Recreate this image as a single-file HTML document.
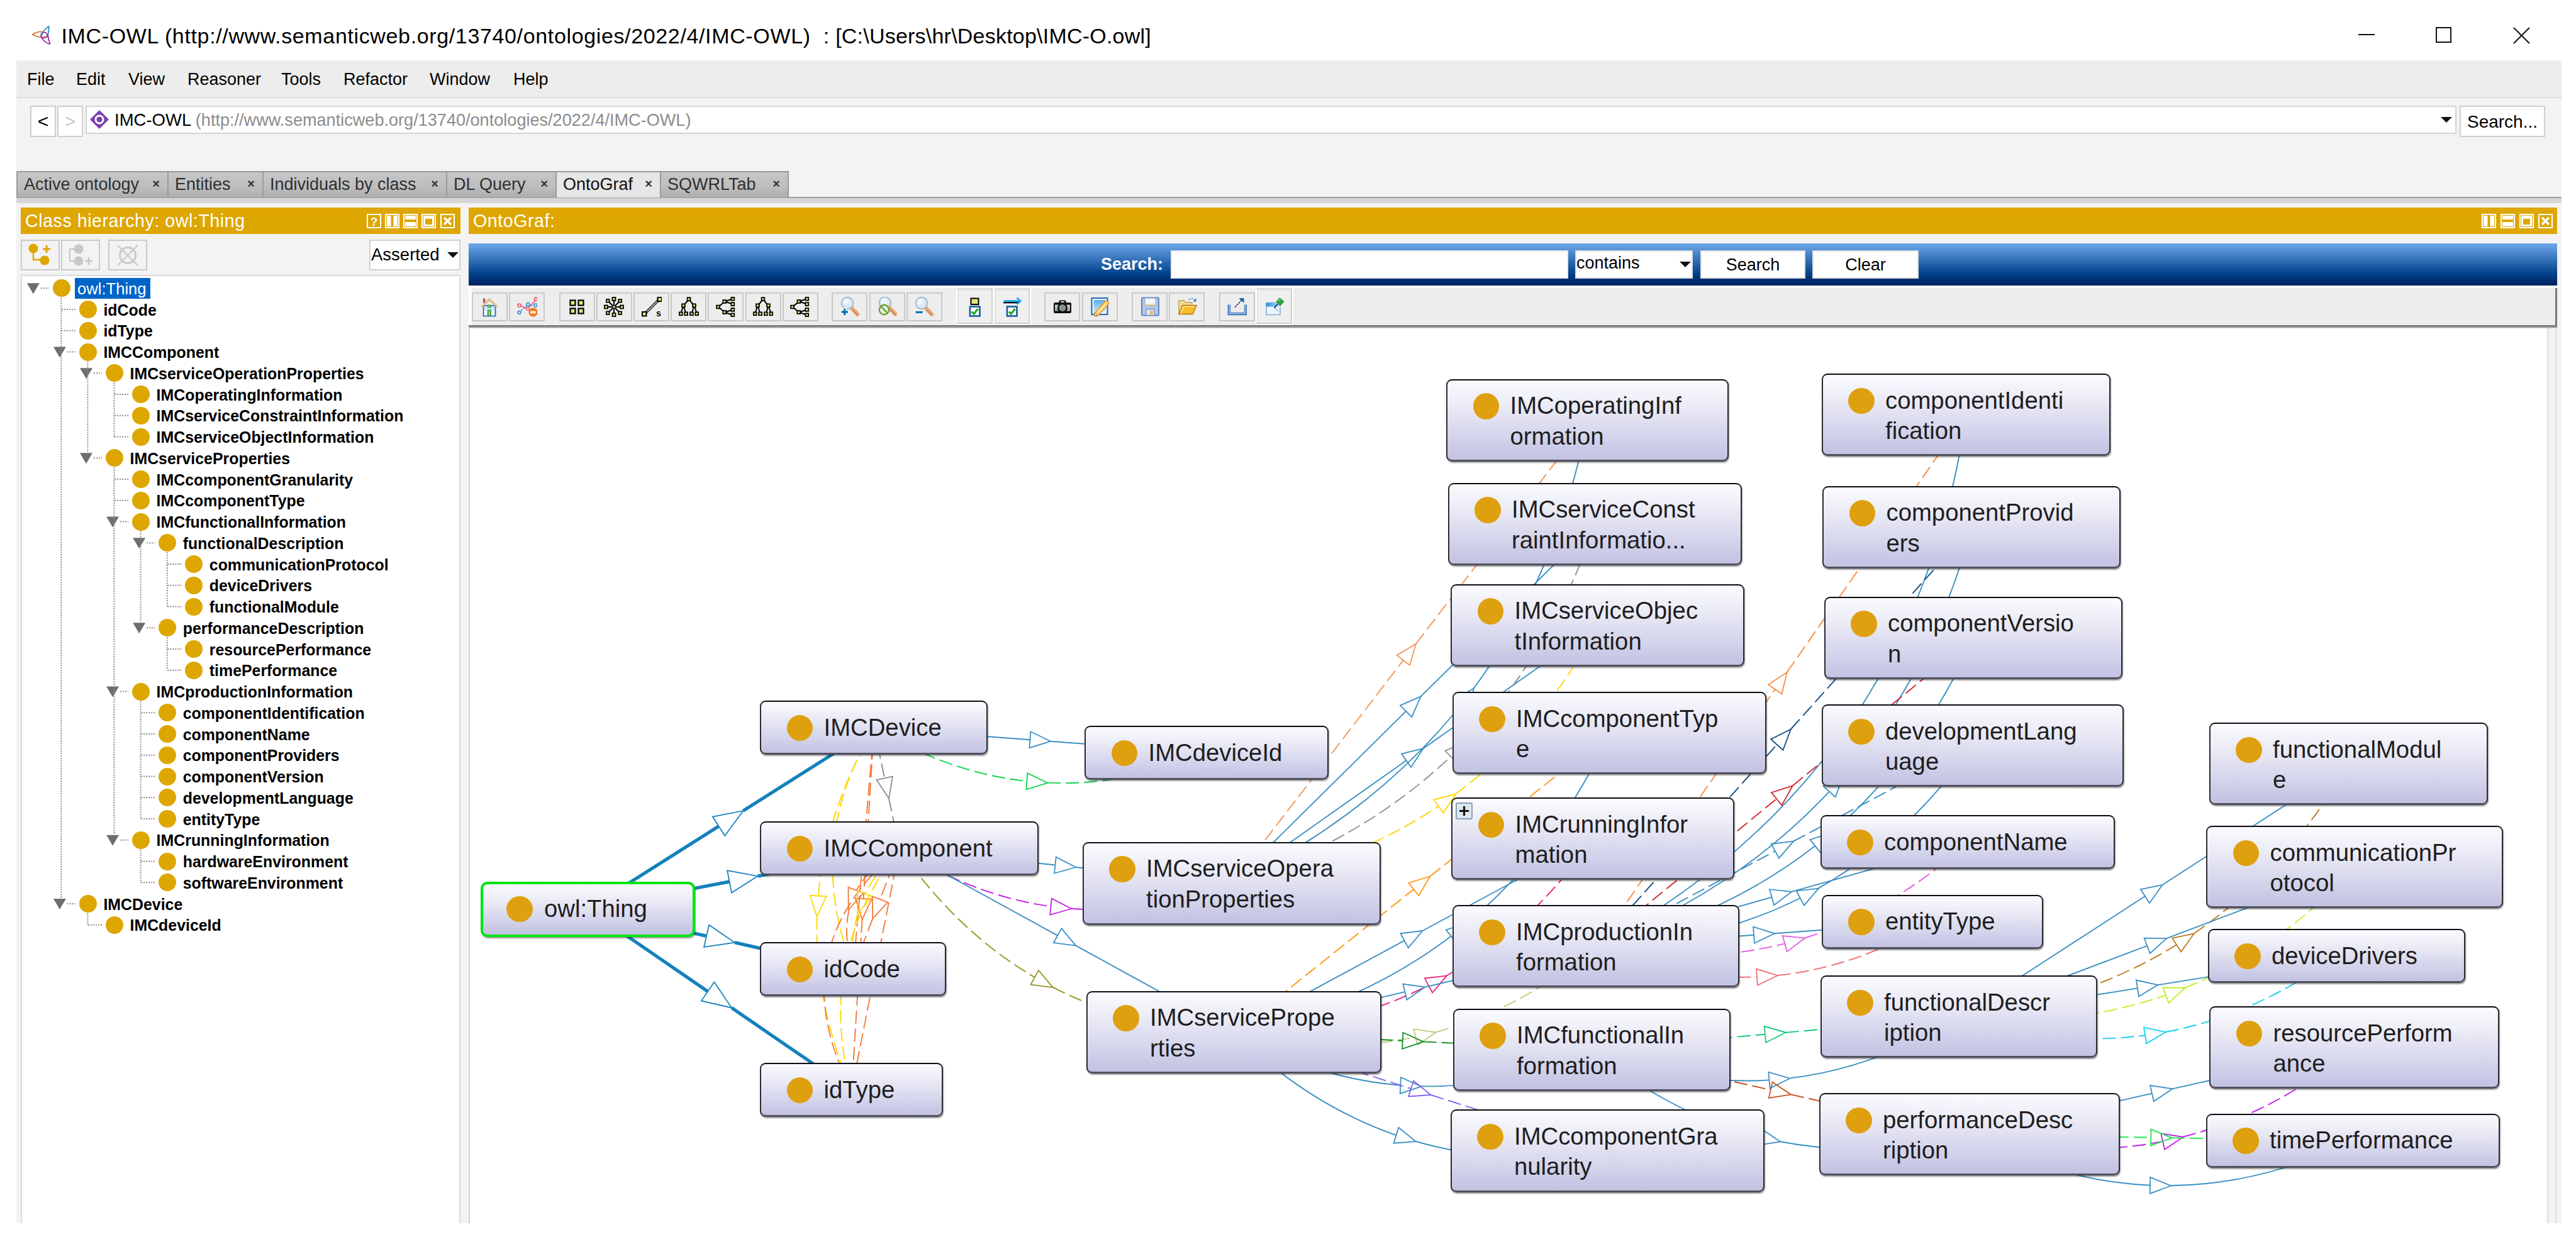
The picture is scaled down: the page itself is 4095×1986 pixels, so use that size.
<!DOCTYPE html><html><head><meta charset="utf-8"><title>IMC-OWL</title><style>
*{box-sizing:border-box;margin:0;padding:0}
html,body{width:4095px;height:1986px;background:#fff;overflow:hidden}
body{position:relative;font-family:"Liberation Sans",sans-serif;color:#000}
.abs{position:absolute}
.t{position:absolute;white-space:nowrap;line-height:1}
#title{left:97.5px;top:40px;font-size:34px;color:#000;letter-spacing:0.5px}
#win{left:26px;top:96px;width:4046px;height:1849px;background:#f3f3f3}
#menubar{left:26px;top:96px;width:4046px;height:60px;background:#ededed;border-bottom:2px solid #dcdcdc}
.menu{font-size:27px;top:113px}
.nb{position:absolute;background:#fff;border:2px solid #cfcfcf;top:168px;height:50px;width:41px;font-size:30px;text-align:center;line-height:46px}
#addr{left:136px;top:168px;width:3769px;height:45px;background:#fff;border:2px solid #d4d4d4}
.tab{position:absolute;top:272px;height:42px;background:linear-gradient(#c6c6c6,#bdbdbd 60%,#adadad);border:2px solid #9a9a9a;border-bottom:none;font-size:27px;line-height:38px;color:#303030;letter-spacing:0;white-space:nowrap;padding-left:10px}
.tab.act{background:#e6e6e6;color:#111}
.tab i{font-style:normal;font-size:20px;position:absolute;right:12px;top:-1px;font-weight:bold;color:#333}
#tabline{left:26px;top:313px;width:4046px;height:10px;background:#d6d6d6;border-top:2px solid #a0a0a0}
.hdr{position:absolute;top:330px;height:42px;background:#dea600;color:#fff;font-size:28.6px;letter-spacing:.55px;line-height:43px;padding-left:7px;white-space:nowrap}
.tree{position:absolute;font-size:24.9px;font-weight:bold;white-space:nowrap;line-height:34px;height:34px;color:#000}
.dot{position:absolute;width:28px;height:28px;border-radius:50%;background:#dea600}
.node{position:absolute;border:2.5px solid #2a2a32;border-top-color:#0c0c10;border-bottom:3.2px solid #50505e;border-radius:9px;background:linear-gradient(#fafaff 0%,#ececf6 30%,#d4d4ec 70%,#c2c2e2 100%);box-shadow:1px 1.5px 2px rgba(0,0,0,.4);font-size:38.3px;line-height:48.5px;color:#1e1e1e;padding:16.5px 0 0 99.5px;white-space:nowrap}
.node b{position:absolute;left:40.5px;top:20.5px;width:41.5px;height:41.5px;border-radius:50%;background:#dfa010}
</style></head><body>
<div class="t" id="title"><span style="letter-spacing:.64px">IMC-OWL (http://www.semanticweb.org/13740/ontologies/2022/4/IMC-OWL)&nbsp; </span><span style="letter-spacing:.22px">: [C:\Users\hr\Desktop\IMC-O.owl]</span></div>
<svg class="abs" style="left:0;top:0" width="100" height="90" viewBox="0 0 100 90"><path d="M51.5 55 Q62 47.5 74 52.5 M51.5 55 Q62 61 74 58" fill="none" stroke="#d2691e" stroke-width="1.7"/><path d="M78 41.5 Q68 48 66 57 M78 41.5 Q77.5 50 75.5 59" fill="none" stroke="#2a8ab8" stroke-width="1.8"/><path d="M79.5 70.5 Q69 67 64.5 57 M79.5 70.5 Q77 62 75.5 54" fill="none" stroke="#9a2aa8" stroke-width="1.8"/><ellipse cx="70" cy="56" rx="5" ry="4.6" fill="none" stroke="#8a3ab0" stroke-width="1.5"/></svg>
<svg class="abs" style="left:3740px;top:30px" width="300" height="60" viewBox="0 0 300 60"><path d="M9 25 H35" stroke="#111" stroke-width="2" fill="none"/><rect x="133" y="14" width="23" height="23" fill="none" stroke="#111" stroke-width="2"/><path d="M256 14 L281 39 M281 14 L256 39" stroke="#111" stroke-width="2" fill="none"/></svg>
<div class="abs" id="win"></div>
<div class="abs" id="menubar"></div>
<div class="t menu" style="left:43px">File</div>
<div class="t menu" style="left:121px">Edit</div>
<div class="t menu" style="left:204px">View</div>
<div class="t menu" style="left:298px">Reasoner</div>
<div class="t menu" style="left:447px">Tools</div>
<div class="t menu" style="left:546px">Refactor</div>
<div class="t menu" style="left:683px">Window</div>
<div class="t menu" style="left:816px">Help</div>
<div class="nb" style="left:48px">&lt;</div><div class="nb" style="left:91px;color:#c8c8d0">&gt;</div>
<div class="abs" id="addr"></div>
<svg class="abs" style="left:142px;top:174px" width="32" height="32" viewBox="0 0 32 32"><path d="M16 1 L31 16 L16 31 L1 16 Z" fill="#7a42b0"/><circle cx="16" cy="16" r="7.5" fill="#fff"/><circle cx="16" cy="16" r="4.6" fill="#7a42b0"/></svg>
<div class="t" style="left:182px;top:177px;font-size:27.5px">IMC-OWL <span style="color:#8c8c8c;font-size:27.1px">(http://www.semanticweb.org/13740/ontologies/2022/4/IMC-OWL)</span></div>
<div class="abs" style="left:3880px;top:186px;width:0;height:0;border-left:9px solid transparent;border-right:9px solid transparent;border-top:9px solid #111"></div>
<div class="abs" style="left:3910px;top:168px;width:136px;height:50px;background:#fff;border:2px solid #d0d0d0;font-size:28px;line-height:48px;text-align:center">Search...</div>
<div class="abs" id="tabline"></div>
<div class="tab" style="left:26px;width:242px">Active ontology<i>&times;</i></div>
<div class="tab" style="left:266px;width:153px">Entities<i>&times;</i></div>
<div class="tab" style="left:417px;width:294px">Individuals by class<i>&times;</i></div>
<div class="tab" style="left:709px;width:176px">DL Query<i>&times;</i></div>
<div class="tab act" style="left:883px;width:168px">OntoGraf<i>&times;</i></div>
<div class="tab" style="left:1049px;width:205px">SQWRLTab<i>&times;</i></div>
<div class="hdr" style="left:33px;width:699px">Class hierarchy: owl:Thing</div>
<div class="hdr" style="left:745px;width:3320px">OntoGraf:</div>
<svg class="abs" style="left:583px;top:340px" width="23" height="23" viewBox="0 0 23 23"><rect x="1" y="1" width="21" height="21" fill="none" stroke="#fff" stroke-width="2"/><text x="11.5" y="19" font-size="19" font-weight="bold" text-anchor="middle" fill="#fff" font-family="Liberation Sans,sans-serif">?</text></svg>
<svg class="abs" style="left:612px;top:340px" width="23" height="23" viewBox="0 0 23 23"><rect x="1" y="1" width="21" height="21" fill="none" stroke="#fff" stroke-width="2"/><rect x="3" y="3" width="6.5" height="17" fill="#fff"/><rect x="13.5" y="3" width="6.5" height="17" fill="#fff"/></svg>
<svg class="abs" style="left:641px;top:340px" width="23" height="23" viewBox="0 0 23 23"><rect x="1" y="1" width="21" height="21" fill="none" stroke="#fff" stroke-width="2"/><rect x="3" y="3" width="17" height="6" fill="#fff"/><rect x="3" y="13" width="17" height="7" fill="#fff"/></svg>
<svg class="abs" style="left:670px;top:340px" width="23" height="23" viewBox="0 0 23 23"><rect x="1" y="1" width="21" height="21" fill="none" stroke="#fff" stroke-width="2"/><rect x="3" y="3" width="17" height="17" fill="#fff"/><rect x="6" y="8" width="11" height="9" fill="#dea600"/></svg>
<svg class="abs" style="left:700px;top:340px" width="23" height="23" viewBox="0 0 23 23"><rect x="1" y="1" width="21" height="21" fill="none" stroke="#fff" stroke-width="2"/><path d="M6 6 L17 17 M17 6 L6 17" stroke="#fff" stroke-width="3.4"/></svg>
<div style="position:absolute;top:381px;height:49px;width:62px;border:2px solid #c9c9c9;background:#f3f3f3;left:33px"></div><div style="position:absolute;top:381px;height:49px;width:62px;border:2px solid #c9c9c9;background:#f3f3f3;left:97px"></div><div style="position:absolute;top:381px;height:49px;width:62px;border:2px solid #c9c9c9;background:#f3f3f3;left:172px"></div>
<svg class="abs" style="left:33px;top:381px" width="62" height="49" viewBox="0 0 62 49"><path d="M20 14 V32 H37" fill="none" stroke="#dea600" stroke-width="2.4"/><circle cx="20" cy="14" r="7.6" fill="#dea600"/><circle cx="38" cy="33" r="7.6" fill="#dea600"/><path d="M35 15 H47 M41 9 V21" stroke="#dea600" stroke-width="3"/></svg>
<svg class="abs" style="left:97px;top:381px" width="62" height="49" viewBox="0 0 62 49"><path d="M23 15 H14 V34 H23" fill="none" stroke="#c4c4c4" stroke-width="2"/><circle cx="28" cy="15" r="7.6" fill="#c8c8c8"/><circle cx="28" cy="34" r="7.6" fill="#c8c8c8"/><path d="M38 34 H50 M44 28 V40" stroke="#c8c8c8" stroke-width="3"/></svg>
<svg class="abs" style="left:172px;top:381px" width="62" height="49" viewBox="0 0 62 49"><circle cx="31" cy="25" r="12.5" fill="none" stroke="#c8c8c8" stroke-width="3"/><path d="M15 9 L47 41 M47 9 L15 41" stroke="#c8c8c8" stroke-width="2.2"/></svg>
<div class="abs" style="left:587px;top:381px;width:145px;height:49px;background:#fff;border:2px solid #d2d2d2"></div>
<div class="t" style="left:590px;top:391px;font-size:27.5px">Asserted</div>
<div class="abs" style="left:711px;top:401px;width:0;height:0;border-left:9px solid transparent;border-right:9px solid transparent;border-top:9px solid #111"></div>
<div class="abs" style="left:33px;top:437px;width:699px;height:1508px;background:#fff;border:2px solid #dadada;border-bottom:none"></div>
<div class="dot" style="left:83.8px;top:444.3px"></div>
<div class="abs" style="left:119px;top:441.8px;width:120px;height:33px;background:#0064c8"></div>
<div class="tree" style="left:123px;top:441.8px;font-weight:normal;color:#fff;font-size:25.6px">owl:Thing</div>
<div class="dot" style="left:125.9px;top:478.1px"></div>
<div class="tree" style="left:164.4px;top:475.6px">idCode</div>
<div class="dot" style="left:125.9px;top:511.8px"></div>
<div class="tree" style="left:164.4px;top:509.3px">idType</div>
<div class="dot" style="left:125.9px;top:545.5px"></div>
<div class="tree" style="left:164.4px;top:543.0px">IMCComponent</div>
<div class="dot" style="left:168.0px;top:579.3px"></div>
<div class="tree" style="left:206.5px;top:576.8px">IMCserviceOperationProperties</div>
<div class="dot" style="left:210.1px;top:613.0px"></div>
<div class="tree" style="left:248.6px;top:610.5px">IMCoperatingInformation</div>
<div class="dot" style="left:210.1px;top:646.8px"></div>
<div class="tree" style="left:248.6px;top:644.3px">IMCserviceConstraintInformation</div>
<div class="dot" style="left:210.1px;top:680.5px"></div>
<div class="tree" style="left:248.6px;top:678.0px">IMCserviceObjectInformation</div>
<div class="dot" style="left:168.0px;top:714.3px"></div>
<div class="tree" style="left:206.5px;top:711.8px">IMCserviceProperties</div>
<div class="dot" style="left:210.1px;top:748.0px"></div>
<div class="tree" style="left:248.6px;top:745.5px">IMCcomponentGranularity</div>
<div class="dot" style="left:210.1px;top:781.8px"></div>
<div class="tree" style="left:248.6px;top:779.3px">IMCcomponentType</div>
<div class="dot" style="left:210.1px;top:815.5px"></div>
<div class="tree" style="left:248.6px;top:813.0px">IMCfunctionalInformation</div>
<div class="dot" style="left:252.2px;top:849.3px"></div>
<div class="tree" style="left:290.7px;top:846.8px">functionalDescription</div>
<div class="dot" style="left:294.3px;top:883.0px"></div>
<div class="tree" style="left:332.8px;top:880.5px">communicationProtocol</div>
<div class="dot" style="left:294.3px;top:916.8px"></div>
<div class="tree" style="left:332.8px;top:914.3px">deviceDrivers</div>
<div class="dot" style="left:294.3px;top:950.5px"></div>
<div class="tree" style="left:332.8px;top:948.0px">functionalModule</div>
<div class="dot" style="left:252.2px;top:984.3px"></div>
<div class="tree" style="left:290.7px;top:981.8px">performanceDescription</div>
<div class="dot" style="left:294.3px;top:1018.0px"></div>
<div class="tree" style="left:332.8px;top:1015.5px">resourcePerformance</div>
<div class="dot" style="left:294.3px;top:1051.8px"></div>
<div class="tree" style="left:332.8px;top:1049.3px">timePerformance</div>
<div class="dot" style="left:210.1px;top:1085.5px"></div>
<div class="tree" style="left:248.6px;top:1083.0px">IMCproductionInformation</div>
<div class="dot" style="left:252.2px;top:1119.3px"></div>
<div class="tree" style="left:290.7px;top:1116.8px">componentIdentification</div>
<div class="dot" style="left:252.2px;top:1153.0px"></div>
<div class="tree" style="left:290.7px;top:1150.5px">componentName</div>
<div class="dot" style="left:252.2px;top:1186.8px"></div>
<div class="tree" style="left:290.7px;top:1184.3px">componentProviders</div>
<div class="dot" style="left:252.2px;top:1220.5px"></div>
<div class="tree" style="left:290.7px;top:1218.0px">componentVersion</div>
<div class="dot" style="left:252.2px;top:1254.3px"></div>
<div class="tree" style="left:290.7px;top:1251.8px">developmentLanguage</div>
<div class="dot" style="left:252.2px;top:1288.0px"></div>
<div class="tree" style="left:290.7px;top:1285.5px">entityType</div>
<div class="dot" style="left:210.1px;top:1321.8px"></div>
<div class="tree" style="left:248.6px;top:1319.3px">IMCrunningInformation</div>
<div class="dot" style="left:252.2px;top:1355.5px"></div>
<div class="tree" style="left:290.7px;top:1353.0px">hardwareEnvironment</div>
<div class="dot" style="left:252.2px;top:1389.3px"></div>
<div class="tree" style="left:290.7px;top:1386.8px">softwareEnvironment</div>
<div class="dot" style="left:125.9px;top:1423.0px"></div>
<div class="tree" style="left:164.4px;top:1420.5px">IMCDevice</div>
<div class="dot" style="left:168.0px;top:1456.8px"></div>
<div class="tree" style="left:206.5px;top:1454.3px">IMCdeviceId</div>
<svg class="abs" style="left:0;top:0" width="760" height="1986"><style>.d{stroke:#8a8a8a;stroke-width:2;stroke-dasharray:2 2;fill:none}</style><path d="M42.8 450.3 h20 l-10 17 z" fill="#6e6e6e"/><path d="M64.8 458.3 H77.8" class="d"/><path d="M97.9 492.1 H119.9" class="d"/><path d="M97.9 525.8 H119.9" class="d"/><path d="M84.9 551.5 h20 l-10 17 z" fill="#6e6e6e"/><path d="M106.9 559.5 H119.9" class="d"/><path d="M127.0 585.3 h20 l-10 17 z" fill="#6e6e6e"/><path d="M149.0 593.3 H162.0" class="d"/><path d="M182.1 627.0 H204.1" class="d"/><path d="M182.1 660.8 H204.1" class="d"/><path d="M182.1 694.5 H204.1" class="d"/><path d="M127.0 720.3 h20 l-10 17 z" fill="#6e6e6e"/><path d="M149.0 728.3 H162.0" class="d"/><path d="M182.1 762.0 H204.1" class="d"/><path d="M182.1 795.8 H204.1" class="d"/><path d="M169.1 821.5 h20 l-10 17 z" fill="#6e6e6e"/><path d="M191.1 829.5 H204.1" class="d"/><path d="M211.2 855.3 h20 l-10 17 z" fill="#6e6e6e"/><path d="M233.2 863.3 H246.2" class="d"/><path d="M266.3 897.0 H288.3" class="d"/><path d="M266.3 930.8 H288.3" class="d"/><path d="M266.3 964.5 H288.3" class="d"/><path d="M211.2 990.3 h20 l-10 17 z" fill="#6e6e6e"/><path d="M233.2 998.3 H246.2" class="d"/><path d="M266.3 1032.0 H288.3" class="d"/><path d="M266.3 1065.8 H288.3" class="d"/><path d="M169.1 1091.5 h20 l-10 17 z" fill="#6e6e6e"/><path d="M191.1 1099.5 H204.1" class="d"/><path d="M224.2 1133.3 H246.2" class="d"/><path d="M224.2 1167.0 H246.2" class="d"/><path d="M224.2 1200.8 H246.2" class="d"/><path d="M224.2 1234.5 H246.2" class="d"/><path d="M224.2 1268.3 H246.2" class="d"/><path d="M224.2 1302.0 H246.2" class="d"/><path d="M169.1 1327.8 h20 l-10 17 z" fill="#6e6e6e"/><path d="M191.1 1335.8 H204.1" class="d"/><path d="M224.2 1369.5 H246.2" class="d"/><path d="M224.2 1403.3 H246.2" class="d"/><path d="M84.9 1429.0 h20 l-10 17 z" fill="#6e6e6e"/><path d="M106.9 1437.0 H119.9" class="d"/><path d="M140.0 1470.8 H162.0" class="d"/><path d="M97.3 473.3 V1428.0" class="d"/><path d="M139.4 574.5 V719.3" class="d"/><path d="M181.5 608.3 V694.5" class="d"/><path d="M181.5 743.3 V1326.8" class="d"/><path d="M223.6 844.5 V989.3" class="d"/><path d="M265.7 878.3 V964.5" class="d"/><path d="M265.7 1013.3 V1065.8" class="d"/><path d="M223.6 1114.5 V1302.0" class="d"/><path d="M223.6 1350.8 V1403.3" class="d"/><path d="M139.4 1452.0 V1470.8" class="d"/></svg>
<svg class="abs" style="left:3945px;top:340px" width="23" height="23" viewBox="0 0 23 23"><rect x="1" y="1" width="21" height="21" fill="none" stroke="#fff" stroke-width="2"/><rect x="3" y="3" width="6.5" height="17" fill="#fff"/><rect x="13.5" y="3" width="6.5" height="17" fill="#fff"/></svg>
<svg class="abs" style="left:3975px;top:340px" width="23" height="23" viewBox="0 0 23 23"><rect x="1" y="1" width="21" height="21" fill="none" stroke="#fff" stroke-width="2"/><rect x="3" y="3" width="17" height="6" fill="#fff"/><rect x="3" y="13" width="17" height="7" fill="#fff"/></svg>
<svg class="abs" style="left:4005px;top:340px" width="23" height="23" viewBox="0 0 23 23"><rect x="1" y="1" width="21" height="21" fill="none" stroke="#fff" stroke-width="2"/><rect x="3" y="3" width="17" height="17" fill="#fff"/><rect x="6" y="8" width="11" height="9" fill="#dea600"/></svg>
<svg class="abs" style="left:4035px;top:340px" width="23" height="23" viewBox="0 0 23 23"><rect x="1" y="1" width="21" height="21" fill="none" stroke="#fff" stroke-width="2"/><path d="M6 6 L17 17 M17 6 L6 17" stroke="#fff" stroke-width="3.4"/></svg>
<div class="abs" style="left:745px;top:387px;width:3320px;height:67px;background:linear-gradient(#6ea6ea 0%,#5c97dc 12%,#2a68b0 45%,#00428a 72%,#002868 92%,#001f5c 100%)"></div>
<div class="t" style="left:1750px;top:407px;font-size:27px;font-weight:bold;color:#fff">Search:</div>
<div class="abs" style="left:1861px;top:398px;width:632px;height:45px;background:#fff;border:2px solid #e8e8e8"></div>
<div class="abs" style="left:2504px;top:398px;width:187px;height:45px;background:#fff;border:2px solid #e0e0e0"></div>
<div class="t" style="left:2506px;top:405px;font-size:27px">contains</div>
<div class="abs" style="left:2670px;top:416px;width:0;height:0;border-left:9px solid transparent;border-right:9px solid transparent;border-top:9px solid #111"></div>
<div class="abs" style="left:2703px;top:398px;width:167px;height:45px;background:#fff;border:2px solid #e0e0e0;font-size:27px;line-height:43px;text-align:center">Search</div>
<div class="abs" style="left:2881px;top:398px;width:169px;height:45px;background:#fff;border:2px solid #e0e0e0;font-size:27px;line-height:43px;text-align:center">Clear</div>
<div class="abs" style="left:745px;top:454px;width:3320px;height:5px;background:#fcfcfc"></div>
<div class="abs" style="left:745px;top:458px;width:3320px;height:60px;background:#ededed"></div>
<div class="abs" style="left:745px;top:454px;width:5px;height:64px;background:#fcfcfc"></div>
<div class="abs" style="left:745px;top:517px;width:3320px;height:5px;background:linear-gradient(#6a6a6a,#8a8a8a 50%,#d8d8d8)"></div>
<div class="abs" style="left:4062px;top:458px;width:3px;height:60px;background:#777"></div>
<div class="abs" style="left:745px;top:522px;width:3305px;height:1423px;background:#fff;border-left:2px solid #d4d4d4"></div>
<div class="abs" style="left:4049px;top:522px;width:2px;height:1423px;background:#dcdcdc"></div>
<div class="abs" style="left:4062px;top:522px;width:2px;height:1423px;background:#dcdcdc"></div>
<div class="abs" style="left:749.5px;top:465px;width:57px;height:46px;border:2px solid #c9c9c9;background:#ededed"></div>
<svg class="abs" style="left:762.0px;top:472px" width="32" height="32" viewBox="0 0 32 32"><rect x="6.5" y="14" width="19" height="16.5" fill="#d4eaf8" stroke="#2a70b8" stroke-width="1.8"/><rect x="8" y="22" width="16" height="7.5" fill="#eef8ff"/><rect x="6" y="2.5" width="3.2" height="7" fill="#b44a38"/><path d="M3.5 16 L16 4 L28.5 16" fill="none" stroke="#d9b27c" stroke-width="3.2"/><path d="M3.5 16 L16 4 L28.5 16" fill="none" stroke="#f4e4c4" stroke-width="1.2" stroke-dasharray="2 2"/><rect x="13" y="12.5" width="5.6" height="5" fill="#2a9a4a"/><rect x="14.6" y="13.8" width="2.4" height="2.4" fill="#e8e040"/><rect x="12.8" y="20.5" width="6" height="10" fill="#2a9a4a"/><rect x="14.7" y="22.5" width="2.2" height="6.5" fill="#e8e040"/></svg>
<div class="abs" style="left:809.3px;top:465px;width:57px;height:46px;border:2px solid #c9c9c9;background:#ededed"></div>
<svg class="abs" style="left:821.8px;top:472px" width="32" height="32" viewBox="0 0 32 32"><path d="M3 13.5 L17 19 L31 3.5" stroke="#f4506a" stroke-width="1.8" fill="none"/><path d="M3 25 L17 13 L30 13.5" stroke="#4a90d8" stroke-width="1.6" fill="none" stroke-dasharray="3 1.5"/><circle cx="3.5" cy="13.5" r="2.4" fill="#fff" stroke="#f4506a" stroke-width="1.6"/><circle cx="30" cy="3.5" r="2.4" fill="#fff" stroke="#f4506a" stroke-width="1.6"/><circle cx="17" cy="19" r="2.2" fill="#fff" stroke="#f4506a" stroke-width="1.5"/><circle cx="3.5" cy="25" r="2.4" fill="#cfe2f6" stroke="#4a90d8" stroke-width="1.6"/><circle cx="17.5" cy="12" r="2.6" fill="#cfe2f6" stroke="#4a90d8" stroke-width="1.6"/><circle cx="29.5" cy="13.5" r="2.6" fill="#cfe2f6" stroke="#4a90d8" stroke-width="1.6"/><circle cx="25.5" cy="24.5" r="7" fill="#f26a0e"/><circle cx="25.5" cy="24.5" r="5.2" fill="#f88a30"/><rect x="21.2" y="23" width="8.6" height="3.2" fill="#fff"/></svg>
<div class="abs" style="left:888.6px;top:465px;width:57px;height:46px;border:2px solid #c9c9c9;background:#ededed"></div>
<svg class="abs" style="left:901.1px;top:472px" width="32" height="32" viewBox="0 0 32 32"><g fill="#e6e478" stroke="#000" stroke-width="2.2"><rect x="5.5" y="5.5" width="8" height="8"/><rect x="18.5" y="5.5" width="8" height="8"/><rect x="5.5" y="18.5" width="8" height="8"/><rect x="18.5" y="18.5" width="8" height="8"/></g></svg>
<div class="abs" style="left:947.8px;top:465px;width:57px;height:46px;border:2px solid #c9c9c9;background:#ededed"></div>
<svg class="abs" style="left:960.3px;top:472px" width="32" height="32" viewBox="0 0 32 32"><path d="M16 3 V29 M3 16 H29 M6.5 6.5 L25.5 25.5 M25.5 6.5 L6.5 25.5" stroke="#000" stroke-width="2"/><rect x="13.5" y="1" width="5" height="5" fill="#e6e478" stroke="#000" stroke-width="1.8"/><rect x="13.5" y="26" width="5" height="5" fill="#e6e478" stroke="#000" stroke-width="1.8"/><rect x="1" y="13.5" width="5" height="5" fill="#e6e478" stroke="#000" stroke-width="1.8"/><rect x="26" y="13.5" width="5" height="5" fill="#e6e478" stroke="#000" stroke-width="1.8"/><rect x="4" y="4" width="4.6" height="4.6" fill="#e6e478" stroke="#000" stroke-width="1.8"/><rect x="23.4" y="4" width="4.6" height="4.6" fill="#e6e478" stroke="#000" stroke-width="1.8"/><rect x="4" y="23.4" width="4.6" height="4.6" fill="#e6e478" stroke="#000" stroke-width="1.8"/><rect x="23.4" y="23.4" width="4.6" height="4.6" fill="#e6e478" stroke="#000" stroke-width="1.8"/><rect x="14.4" y="14.4" width="3.2" height="3.2" fill="#e6e478"/></svg>
<div class="abs" style="left:1007.0px;top:465px;width:57px;height:46px;border:2px solid #c9c9c9;background:#ededed"></div>
<svg class="abs" style="left:1019.5px;top:472px" width="32" height="32" viewBox="0 0 32 32"><path d="M5 27 L28 4" stroke="#222" stroke-width="4.4"/><path d="M5 27 L28 4" stroke="#c4c4c4" stroke-width="2"/><path d="M5 27 L28 4" stroke="#555" stroke-width="2" stroke-dasharray="1.5 3"/><rect x="1" y="24" width="6.4" height="6.4" fill="#e6e478" stroke="#000" stroke-width="2"/><rect x="25.5" y="0.8" width="6.4" height="6.4" fill="#e6e478" stroke="#000" stroke-width="2"/><text x="23" y="31" font-size="14" font-family="Liberation Sans,sans-serif" font-weight="bold">s</text></svg>
<div class="abs" style="left:1066.2px;top:465px;width:57px;height:46px;border:2px solid #c9c9c9;background:#ededed"></div>
<svg class="abs" style="left:1078.7px;top:472px" width="32" height="32" viewBox="0 0 32 32"><path d="M16 4 L7.5 14 M16 4 L24.5 14 M7.5 14 L3 27 M7.5 14 L11.5 27 M24.5 14 L20.5 27 M24.5 14 L29 27" stroke="#000" stroke-width="2" fill="none"/><rect x="13.6" y="1.2" width="4.8" height="4.8" fill="#e6e478" stroke="#000" stroke-width="1.8"/><rect x="5.1" y="11.4" width="4.8" height="4.8" fill="#e6e478" stroke="#000" stroke-width="1.8"/><rect x="22.1" y="11.4" width="4.8" height="4.8" fill="#e6e478" stroke="#000" stroke-width="1.8"/><rect x="0.8" y="24.4" width="4.8" height="4.8" fill="#e6e478" stroke="#000" stroke-width="1.8"/><rect x="9.2" y="24.4" width="4.8" height="4.8" fill="#e6e478" stroke="#000" stroke-width="1.8"/><rect x="18" y="24.4" width="4.8" height="4.8" fill="#e6e478" stroke="#000" stroke-width="1.8"/><rect x="26.4" y="24.4" width="4.8" height="4.8" fill="#e6e478" stroke="#000" stroke-width="1.8"/></svg>
<div class="abs" style="left:1125.4px;top:465px;width:57px;height:46px;border:2px solid #c9c9c9;background:#ededed"></div>
<svg class="abs" style="left:1137.9px;top:472px" width="32" height="32" viewBox="0 0 32 32"><path d="M4 16 L14 7.5 M4 16 L14 24.5 M14 7.5 L27 3 M14 7.5 L27 11.5 M14 24.5 L27 20.5 M14 24.5 L27 29" stroke="#000" stroke-width="2" fill="none"/><rect x="1.2" y="13.6" width="4.8" height="4.8" fill="#e6e478" stroke="#000" stroke-width="1.8"/><rect x="11.4" y="5.1" width="4.8" height="4.8" fill="#e6e478" stroke="#000" stroke-width="1.8"/><rect x="11.4" y="22.1" width="4.8" height="4.8" fill="#e6e478" stroke="#000" stroke-width="1.8"/><rect x="24.4" y="0.8" width="4.8" height="4.8" fill="#e6e478" stroke="#000" stroke-width="1.8"/><rect x="24.4" y="9.2" width="4.8" height="4.8" fill="#e6e478" stroke="#000" stroke-width="1.8"/><rect x="24.4" y="18" width="4.8" height="4.8" fill="#e6e478" stroke="#000" stroke-width="1.8"/><rect x="24.4" y="26.4" width="4.8" height="4.8" fill="#e6e478" stroke="#000" stroke-width="1.8"/></svg>
<div class="abs" style="left:1184.6px;top:465px;width:57px;height:46px;border:2px solid #c9c9c9;background:#ededed"></div>
<svg class="abs" style="left:1197.1px;top:472px" width="32" height="32" viewBox="0 0 32 32"><path d="M16 4 L7.5 14 M16 4 L24.5 14 M7.5 14 L3 27 M7.5 14 L11.5 27 M24.5 14 L20.5 27 M24.5 14 L29 27" stroke="#000" stroke-width="2" fill="none"/><rect x="13.6" y="1.2" width="4.8" height="4.8" fill="#e6e478" stroke="#000" stroke-width="1.8"/><rect x="5.1" y="11.4" width="4.8" height="4.8" fill="#e6e478" stroke="#000" stroke-width="1.8"/><rect x="22.1" y="11.4" width="4.8" height="4.8" fill="#e6e478" stroke="#000" stroke-width="1.8"/><rect x="0.8" y="24.4" width="4.8" height="4.8" fill="#e6e478" stroke="#000" stroke-width="1.8"/><rect x="9.2" y="24.4" width="4.8" height="4.8" fill="#e6e478" stroke="#000" stroke-width="1.8"/><rect x="18" y="24.4" width="4.8" height="4.8" fill="#e6e478" stroke="#000" stroke-width="1.8"/><rect x="26.4" y="24.4" width="4.8" height="4.8" fill="#e6e478" stroke="#000" stroke-width="1.8"/></svg>
<div class="abs" style="left:1243.8px;top:465px;width:57px;height:46px;border:2px solid #c9c9c9;background:#ededed"></div>
<svg class="abs" style="left:1256.3px;top:472px" width="32" height="32" viewBox="0 0 32 32"><path d="M4 16 L14 7.5 M4 16 L14 24.5 M14 7.5 L27 3 M14 7.5 L27 11.5 M14 24.5 L27 20.5 M14 24.5 L27 29" stroke="#000" stroke-width="2" fill="none"/><rect x="1.2" y="13.6" width="4.8" height="4.8" fill="#e6e478" stroke="#000" stroke-width="1.8"/><rect x="11.4" y="5.1" width="4.8" height="4.8" fill="#e6e478" stroke="#000" stroke-width="1.8"/><rect x="11.4" y="22.1" width="4.8" height="4.8" fill="#e6e478" stroke="#000" stroke-width="1.8"/><rect x="24.4" y="0.8" width="4.8" height="4.8" fill="#e6e478" stroke="#000" stroke-width="1.8"/><rect x="24.4" y="9.2" width="4.8" height="4.8" fill="#e6e478" stroke="#000" stroke-width="1.8"/><rect x="24.4" y="18" width="4.8" height="4.8" fill="#e6e478" stroke="#000" stroke-width="1.8"/><rect x="24.4" y="26.4" width="4.8" height="4.8" fill="#e6e478" stroke="#000" stroke-width="1.8"/></svg>
<div class="abs" style="left:1322.3px;top:465px;width:57px;height:46px;border:2px solid #c9c9c9;background:#ededed"></div>
<svg class="abs" style="left:1334.8px;top:472px" width="32" height="32" viewBox="0 0 32 32"><path d="M18 17 L28 27.5" stroke="#e8a878" stroke-width="6.4" stroke-linecap="round"/><path d="M20 20.5 L29 30" stroke="#c88050" stroke-width="1.6"/><circle cx="12" cy="10" r="9.3" fill="#dbe8f4" stroke="#a9b9cc" stroke-width="2"/><circle cx="10" cy="7.5" r="5" fill="#eef4fa"/><path d="M1.5 24 H14 M7.7 17.8 V30.2" stroke="#fff" stroke-width="6.4"/><path d="M2.5 24 H13 M7.7 18.8 V29.2" stroke="#1878b0" stroke-width="3.6"/></svg>
<div class="abs" style="left:1381.5px;top:465px;width:57px;height:46px;border:2px solid #c9c9c9;background:#ededed"></div>
<svg class="abs" style="left:1394.0px;top:472px" width="32" height="32" viewBox="0 0 32 32"><path d="M19 16.5 L29 27.0" stroke="#e8a878" stroke-width="6.4" stroke-linecap="round"/><path d="M21 20.0 L30 29.5" stroke="#c88050" stroke-width="1.6"/><circle cx="13" cy="9.5" r="9.3" fill="#dbe8f4" stroke="#a9b9cc" stroke-width="2"/><circle cx="11" cy="7.0" r="5" fill="#eef4fa"/><circle cx="11.5" cy="20.5" r="7.6" fill="rgba(240,246,236,.7)" stroke="#74a238" stroke-width="2.6"/><path d="M6.5 15.5 L16.5 25.5" stroke="#74a238" stroke-width="2.6"/></svg>
<div class="abs" style="left:1440.7px;top:465px;width:57px;height:46px;border:2px solid #c9c9c9;background:#ededed"></div>
<svg class="abs" style="left:1453.2px;top:472px" width="32" height="32" viewBox="0 0 32 32"><path d="M18 17 L28 27.5" stroke="#e8a878" stroke-width="6.4" stroke-linecap="round"/><path d="M20 20.5 L29 30" stroke="#c88050" stroke-width="1.6"/><circle cx="12" cy="10" r="9.3" fill="#dbe8f4" stroke="#a9b9cc" stroke-width="2"/><circle cx="10" cy="7.5" r="5" fill="#eef4fa"/><path d="M1.5 24.5 H15" stroke="#fff" stroke-width="6.4"/><path d="M2.5 24.5 H14" stroke="#1878b0" stroke-width="3.6"/></svg>
<div class="abs" style="left:1519.8px;top:458px;width:58px;height:57px;border:2px solid #cfcfcf;border-left-color:#fff;border-top-color:#dcdcdc;background:#efefef;box-shadow:inset 2px 2px 0 #e2e2e2,2px 0 0 #fff,0 2px 0 #fff"></div>
<svg class="abs" style="left:1533.3px;top:472px" width="32" height="32" viewBox="0 0 32 32"><rect x="10.5" y="2.5" width="12" height="9.5" fill="#e6e478" stroke="#000" stroke-width="2"/><rect x="9" y="15.5" width="15.5" height="15" fill="#fff" stroke="#185a9c" stroke-width="2.6"/><path d="M12 23.5 L15.2 27.2 L21.5 19" stroke="#22aa22" stroke-width="3.2" fill="none"/></svg>
<div class="abs" style="left:1578.5px;top:458px;width:58px;height:57px;border:2px solid #cfcfcf;border-left-color:#fff;border-top-color:#dcdcdc;background:#efefef;box-shadow:inset 2px 2px 0 #e2e2e2,2px 0 0 #fff,0 2px 0 #fff"></div>
<svg class="abs" style="left:1592.0px;top:472px" width="32" height="32" viewBox="0 0 32 32"><path d="M3 9.2 H27" stroke="#000" stroke-width="2.2"/><path d="M4 6.5 H29" stroke="#10a4f4" stroke-width="2.6"/><path d="M24.5 1.5 L30.5 6.8 L24.5 12" stroke="#10a4f4" stroke-width="2.4" fill="none"/><rect x="9" y="15.5" width="15.5" height="15" fill="#fff" stroke="#185a9c" stroke-width="2.6"/><path d="M12 23.5 L15.2 27.2 L21.5 19" stroke="#22aa22" stroke-width="3.2" fill="none"/></svg>
<div class="abs" style="left:1660.4px;top:465px;width:57px;height:46px;border:2px solid #c9c9c9;background:#ededed"></div>
<svg class="abs" style="left:1672.9px;top:472px" width="32" height="32" viewBox="0 0 32 32"><rect x="2" y="9" width="28" height="17" rx="2" fill="#0a0a0a"/><rect x="10.5" y="5.5" width="11" height="5" rx="1.5" fill="#0a0a0a"/><rect x="13" y="7" width="6" height="2" fill="#d8d8d8"/><rect x="4" y="12.5" width="6" height="10" fill="#c8c8c8"/><rect x="22" y="12.5" width="6" height="10" fill="#c8c8c8"/><rect x="4" y="18" width="24" height="4.5" fill="#8a8a8a" opacity=".6"/><circle cx="16" cy="17.5" r="6.8" fill="#8c8c8c" stroke="#0a0a0a" stroke-width="2.4"/><circle cx="13.6" cy="15.6" r="1.4" fill="#20d8f0"/></svg>
<div class="abs" style="left:1719.6px;top:465px;width:57px;height:46px;border:2px solid #c9c9c9;background:#ededed"></div>
<svg class="abs" style="left:1732.1px;top:472px" width="32" height="32" viewBox="0 0 32 32"><defs><linearGradient id="ed" x1="0" y1="0" x2="0" y2="1"><stop offset="0" stop-color="#58aee6"/><stop offset="1" stop-color="#d8ecfa"/></linearGradient></defs><rect x="3.5" y="2" width="25" height="26" fill="#fff" stroke="#2a6cc0" stroke-width="2.2"/><rect x="6.5" y="5" width="19" height="20" fill="url(#ed)"/><path d="M27 10 L11 27.5" stroke="#e89a20" stroke-width="8" stroke-linecap="round"/><path d="M27 10 L11 27.5" stroke="#fcd870" stroke-width="5" stroke-linecap="round"/><path d="M26 11.5 L12 26.5" stroke="#fff2c0" stroke-width="1.4"/><path d="M7 30.5 L8.5 24.5 L13.5 29 Z" fill="#f0c8a0" stroke="#b07040" stroke-width=".8"/></svg>
<div class="abs" style="left:1799.0px;top:465px;width:57px;height:46px;border:2px solid #c9c9c9;background:#ededed"></div>
<svg class="abs" style="left:1811.5px;top:472px" width="32" height="32" viewBox="0 0 32 32"><rect x="3" y="1.5" width="27" height="28" rx="1.5" fill="#b4c8e2" stroke="#5a88c0" stroke-width="2"/><rect x="8" y="2" width="17" height="12" fill="#f2f6fa" stroke="#8aa8cc" stroke-width="1"/><rect x="8" y="11.5" width="17" height="2" fill="#f0c890"/><rect x="10" y="19.5" width="13" height="10" fill="#dbe5f0" stroke="#6a90c0" stroke-width="1.2"/><rect x="16" y="22" width="4.5" height="6.5" fill="#e4b870"/></svg>
<div class="abs" style="left:1858.2px;top:465px;width:57px;height:46px;border:2px solid #c9c9c9;background:#ededed"></div>
<svg class="abs" style="left:1870.7px;top:472px" width="32" height="32" viewBox="0 0 32 32"><path d="M3 27 V6 H11 L13.5 9 H24 V13" fill="#f4dc90" stroke="#c4a050" stroke-width="1.4"/><path d="M3 27.5 L8.5 13.5 H31 L25 27.5 Z" fill="#f8bc28" stroke="#b07810" stroke-width="1.4"/><path d="M6 26 L10 15.5 H28" stroke="#fde8a0" stroke-width="1.6" fill="none"/><path d="M19 5 Q24 .5 28.5 5.5" stroke="#6aa0dc" stroke-width="1.8" fill="none" stroke-dasharray="3 1.4"/><path d="M25.5 7.5 H30.5 V2.5 Z" fill="#2a70c0"/></svg>
<div class="abs" style="left:1937.6px;top:465px;width:57px;height:46px;border:2px solid #c9c9c9;background:#ededed"></div>
<svg class="abs" style="left:1950.1px;top:472px" width="32" height="32" viewBox="0 0 32 32"><path d="M4 12.5 V27 H30 V12.5" fill="none" stroke="#3a72b8" stroke-width="4.6"/><path d="M4.5 12.5 V26.5 H29.5 V12.5" fill="none" stroke="#a8c8ec" stroke-width="1.6"/><path d="M13 16.5 L24 5" stroke="#2a2a9a" stroke-width="1.8" stroke-dasharray="3 1.2"/><path d="M19.5 2 H27.5 V10 Z" fill="#1860a8"/></svg>
<div class="abs" style="left:1996.4px;top:458px;width:58px;height:57px;border:2px solid #cfcfcf;border-left-color:#fff;border-top-color:#dcdcdc;background:#efefef;box-shadow:inset 2px 2px 0 #e2e2e2,2px 0 0 #fff,0 2px 0 #fff"></div>
<svg class="abs" style="left:2009.9px;top:472px" width="32" height="32" viewBox="0 0 32 32"><defs><linearGradient id="pn" x1="0" y1="0" x2="1" y2="0"><stop offset="0" stop-color="#1a90e8"/><stop offset="1" stop-color="#c8e4f8"/></linearGradient></defs><rect x="3" y="9.5" width="22" height="19" fill="#eaf4fc" stroke="#88b0d8" stroke-width="1.6"/><rect x="3" y="9.5" width="22" height="6" fill="url(#pn)"/><path d="M16 17 L22 23" stroke="#78b0e0" stroke-width="1.4"/><path d="M15.5 17.5 L21 11.5" stroke="#1a3a8a" stroke-width="2"/><path d="M19 8 L24.5 1.5 L31 7.5 L25 14 Z" fill="#28a838" stroke="#187828" stroke-width="1"/><path d="M22 6.5 L26 3" stroke="#90e090" stroke-width="1.6"/></svg>
<svg class="abs" style="left:0;top:0" width="4095" height="1986" viewBox="0 0 4095 1986"><path d="M934.5 1445.5L1142.6 1313.8M1181.4 1289.2L1389.5 1157.5" stroke="#1581ba" stroke-width="5.2" fill="none"/><path d="M1181.4 1289.2L1152.2 1329.0L1132.9 1298.6Z" fill="none" stroke="#1581ba" stroke-width="1.8" stroke-linejoin="miter"/><path d="M934.5 1445.5L1159.5 1401.9M1204.7 1393.1L1429.8 1349.5" stroke="#1581ba" stroke-width="5.2" fill="none"/><path d="M1204.7 1393.1L1163.0 1419.5L1156.1 1384.2Z" fill="none" stroke="#1581ba" stroke-width="1.8" stroke-linejoin="miter"/><path d="M934.5 1445.5L1123.1 1488.4M1167.9 1498.6L1356.5 1541.5" stroke="#1581ba" stroke-width="5.2" fill="none"/><path d="M1167.9 1498.6L1119.1 1505.9L1127.1 1470.8Z" fill="none" stroke="#1581ba" stroke-width="1.8" stroke-linejoin="miter"/><path d="M934.5 1445.5L1125.2 1576.5M1163.1 1602.5L1353.8 1733.5" stroke="#1581ba" stroke-width="5.2" fill="none"/><path d="M1163.1 1602.5L1115.0 1591.3L1135.4 1561.6Z" fill="none" stroke="#1581ba" stroke-width="1.8" stroke-linejoin="miter"/><path d="M1389.5 1157.5L1637.4 1176.3M1670.3 1178.7L1918.2 1197.5" stroke="#3a8fc4" stroke-width="1.9" fill="none"/><path d="M1670.3 1178.7L1636.4 1189.2L1638.4 1163.3Z" fill="none" stroke="#3a8fc4" stroke-width="1.8" stroke-linejoin="miter"/><path d="M1389.5 1157.5Q1508.8 1228.9 1632.4 1242.1M1665.3 1244.6Q1789.6 1250.1 1918.2 1197.5" stroke="#14d250" stroke-width="1.9" fill="none" stroke-dasharray="21 8"/><path d="M1665.3 1244.8L1631.4 1255.3L1633.4 1229.4Z" fill="none" stroke="#14d250" stroke-width="1.8" stroke-linejoin="miter"/><path d="M1389.5 1157.5L1406.2 1237.4M1413.0 1269.6L1429.8 1349.5" stroke="#8c8c8c" stroke-width="1.9" fill="none" stroke-dasharray="21 8"/><path d="M1413.0 1269.6L1393.5 1240.0L1419.0 1234.7Z" fill="none" stroke="#8c8c8c" stroke-width="1.8" stroke-linejoin="miter"/><path d="M1389.5 1157.5L1374.4 1333.1M1371.6 1365.9L1356.5 1541.5" stroke="#f47a3a" stroke-width="1.9" fill="none" stroke-dasharray="21 8"/><path d="M1371.6 1365.9L1361.5 1331.9L1387.4 1334.2Z" fill="none" stroke="#f47a3a" stroke-width="1.8" stroke-linejoin="miter"/><path d="M1389.5 1157.5L1372.6 1429.0M1370.6 1462.0L1353.8 1733.5" stroke="#f47a3a" stroke-width="1.9" fill="none" stroke-dasharray="21 8"/><path d="M1370.6 1462.0L1359.7 1428.2L1385.6 1429.8Z" fill="none" stroke="#f47a3a" stroke-width="1.8" stroke-linejoin="miter"/><path d="M1389.5 1157.5Q1338.1 1241.5 1326.8 1329.0M1323.9 1361.8Q1320.2 1449.9 1356.5 1541.5" stroke="#ffd700" stroke-width="1.9" fill="none" stroke-dasharray="21 8"/><path d="M1323.6 1361.8L1313.5 1327.8L1339.4 1330.0Z" fill="none" stroke="#ffd700" stroke-width="1.8" stroke-linejoin="miter"/><path d="M1389.5 1157.5Q1313.2 1289.1 1300.9 1424.6M1298.8 1457.5Q1294.3 1593.5 1353.8 1733.5" stroke="#ffd700" stroke-width="1.9" fill="none" stroke-dasharray="21 8"/><path d="M1298.6 1457.5L1287.7 1423.8L1313.6 1425.4Z" fill="none" stroke="#ffd700" stroke-width="1.8" stroke-linejoin="miter"/><path d="M1429.8 1349.5Q1382.1 1377.5 1361.6 1415.8M1349.8 1446.6Q1339.6 1488.9 1356.5 1541.5" stroke="#f47a3a" stroke-width="1.9" fill="none" stroke-dasharray="21 8"/><path d="M1348.8 1446.3L1348.5 1410.8L1372.8 1420.1Z" fill="none" stroke="#f47a3a" stroke-width="1.8" stroke-linejoin="miter"/><path d="M1429.8 1349.5Q1342.0 1423.5 1318.7 1510.2M1312.3 1542.6Q1300.8 1631.7 1353.8 1733.5" stroke="#f47a3a" stroke-width="1.9" fill="none" stroke-dasharray="21 8"/><path d="M1311.7 1542.5L1305.4 1507.6L1330.9 1512.6Z" fill="none" stroke="#f47a3a" stroke-width="1.8" stroke-linejoin="miter"/><path d="M1429.8 1349.5Q1394.2 1382.1 1375.6 1421.2M1363.9 1452.0Q1351.7 1493.5 1356.5 1541.5" stroke="#ffd700" stroke-width="1.9" fill="none" stroke-dasharray="21 8"/><path d="M1363.2 1451.8L1362.9 1416.3L1387.2 1425.6Z" fill="none" stroke="#ffd700" stroke-width="1.8" stroke-linejoin="miter"/><path d="M1429.8 1349.5Q1368.4 1428.7 1347.3 1515.9M1340.9 1548.3Q1327.2 1636.9 1353.8 1733.5" stroke="#ffd700" stroke-width="1.9" fill="none" stroke-dasharray="21 8"/><path d="M1340.5 1548.2L1334.2 1513.3L1359.7 1518.3Z" fill="none" stroke="#ffd700" stroke-width="1.8" stroke-linejoin="miter"/><path d="M1429.8 1349.5L1395.0 1525.3M1388.5 1557.7L1353.8 1733.5" stroke="#f47a3a" stroke-width="1.9" fill="none" stroke-dasharray="21 8"/><path d="M1388.5 1557.7L1382.2 1522.8L1407.7 1527.8Z" fill="none" stroke="#f47a3a" stroke-width="1.8" stroke-linejoin="miter"/><path d="M1429.8 1349.5L1399.0 1430.1M1387.2 1460.9L1356.5 1541.5" stroke="#f47a3a" stroke-width="1.9" fill="none" stroke-dasharray="21 8"/><path d="M1387.2 1460.9L1386.9 1425.4L1411.2 1434.7Z" fill="none" stroke="#f47a3a" stroke-width="1.8" stroke-linejoin="miter"/><path d="M1429.8 1349.5L1677.5 1375.5M1710.3 1379.0L1958.0 1405.0" stroke="#3a8fc4" stroke-width="1.9" fill="none"/><path d="M1710.3 1379.0L1676.1 1388.5L1678.8 1362.6Z" fill="none" stroke="#3a8fc4" stroke-width="1.8" stroke-linejoin="miter"/><path d="M1429.8 1349.5Q1547.1 1424.4 1670.6 1441.3M1703.4 1444.8Q1827.6 1453.9 1958.0 1405.0" stroke="#c81ee6" stroke-width="1.9" fill="none" stroke-dasharray="21 8"/><path d="M1703.3 1445.0L1669.2 1454.5L1671.9 1428.6Z" fill="none" stroke="#c81ee6" stroke-width="1.8" stroke-linejoin="miter"/><path d="M1429.8 1349.5L1681.3 1487.7M1710.2 1503.6L1961.8 1641.8" stroke="#3a8fc4" stroke-width="1.9" fill="none"/><path d="M1710.2 1503.6L1675.0 1499.1L1687.5 1476.3Z" fill="none" stroke="#3a8fc4" stroke-width="1.8" stroke-linejoin="miter"/><path d="M1429.8 1349.5Q1521.0 1481.5 1644.9 1554.0M1673.8 1569.9Q1801.4 1635.5 1961.8 1641.8" stroke="#96961e" stroke-width="1.9" fill="none" stroke-dasharray="21 8"/><path d="M1673.7 1570.1L1638.5 1565.6L1651.0 1542.8Z" fill="none" stroke="#96961e" stroke-width="1.8" stroke-linejoin="miter"/><path d="M1958.0 1405.0L2230.8 1049.8M2250.9 1023.7L2523.8 668.5" stroke="#f0965a" stroke-width="1.9" fill="none" stroke-dasharray="21 8"/><path d="M2250.9 1023.7L2241.1 1057.8L2220.5 1041.9Z" fill="none" stroke="#f0965a" stroke-width="1.8" stroke-linejoin="miter"/><path d="M1958.0 1405.0Q2183.2 1295.6 2322.8 1120.5M2342.9 1094.3Q2476.1 914.3 2523.8 668.5" stroke="#3a8fc4" stroke-width="1.9" fill="none"/><path d="M2343.0 1094.4L2333.2 1128.5L2312.6 1112.6Z" fill="none" stroke="#3a8fc4" stroke-width="1.8" stroke-linejoin="miter"/><path d="M1958.0 1405.0L2235.0 1130.9M2258.5 1107.6L2535.5 833.5" stroke="#3a8fc4" stroke-width="1.9" fill="none"/><path d="M2258.5 1107.6L2244.2 1140.1L2225.9 1121.6Z" fill="none" stroke="#3a8fc4" stroke-width="1.8" stroke-linejoin="miter"/><path d="M1958.0 1405.0Q2165.0 1337.2 2306.3 1202.9M2329.8 1179.7Q2465.5 1039.8 2535.5 833.5" stroke="#909090" stroke-width="1.9" fill="none" stroke-dasharray="21 8"/><path d="M2329.9 1179.8L2315.6 1212.3L2297.3 1193.8Z" fill="none" stroke="#909090" stroke-width="1.8" stroke-linejoin="miter"/><path d="M1958.0 1405.0L2235.5 1209.3M2262.5 1190.2L2540.0 994.5" stroke="#3a8fc4" stroke-width="1.9" fill="none"/><path d="M2262.5 1190.2L2243.0 1219.9L2228.0 1198.6Z" fill="none" stroke="#3a8fc4" stroke-width="1.8" stroke-linejoin="miter"/><path d="M1958.0 1405.0Q2145.7 1376.5 2286.7 1281.9M2313.7 1262.8Q2450.2 1161.7 2540.0 994.5" stroke="#ffd700" stroke-width="1.9" fill="none" stroke-dasharray="21 8"/><path d="M2313.8 1263.0L2294.3 1292.6L2279.3 1271.4Z" fill="none" stroke="#ffd700" stroke-width="1.8" stroke-linejoin="miter"/><path d="M1961.8 1641.8L2247.3 1414.0M2273.2 1393.5L2558.8 1165.8" stroke="#ff9614" stroke-width="1.9" fill="none" stroke-dasharray="21 8"/><path d="M2273.2 1393.5L2255.5 1424.2L2239.2 1403.9Z" fill="none" stroke="#ff9614" stroke-width="1.8" stroke-linejoin="miter"/><path d="M1961.8 1641.8Q2161.5 1599.3 2306.7 1488.5M2332.5 1467.9Q2472.9 1351.0 2558.8 1165.8" stroke="#3a8fc4" stroke-width="1.9" fill="none"/><path d="M2332.7 1468.1L2315.0 1498.8L2298.7 1478.5Z" fill="none" stroke="#3a8fc4" stroke-width="1.8" stroke-linejoin="miter"/><path d="M1961.8 1641.8L2232.5 1495.7M2261.5 1480.0L2532.2 1334.0" stroke="#3a8fc4" stroke-width="1.9" fill="none"/><path d="M2261.5 1480.0L2238.7 1507.2L2226.3 1484.3Z" fill="none" stroke="#3a8fc4" stroke-width="1.8" stroke-linejoin="miter"/><path d="M1961.8 1641.8Q2133.6 1636.4 2270.8 1566.8M2299.9 1551.2Q2433.4 1474.7 2532.2 1334.0" stroke="#f01e82" stroke-width="1.9" fill="none" stroke-dasharray="21 8"/><path d="M2300.0 1551.4L2277.1 1578.5L2264.8 1555.6Z" fill="none" stroke="#f01e82" stroke-width="1.8" stroke-linejoin="miter"/><path d="M1961.8 1641.8L2233.3 1577.2M2265.4 1569.6L2537.0 1505.0" stroke="#3a8fc4" stroke-width="1.9" fill="none"/><path d="M2265.4 1569.6L2236.3 1589.8L2230.3 1564.5Z" fill="none" stroke="#3a8fc4" stroke-width="1.8" stroke-linejoin="miter"/><path d="M1961.8 1641.8Q2113.7 1677.4 2250.4 1648.9M2282.5 1641.2Q2417.4 1605.2 2537.0 1505.0" stroke="#c8c882" stroke-width="1.9" fill="none" stroke-dasharray="21 8"/><path d="M2282.5 1641.5L2253.4 1661.7L2247.4 1636.4Z" fill="none" stroke="#c8c882" stroke-width="1.8" stroke-linejoin="miter"/><path d="M1961.8 1641.8L2229.8 1654.8M2262.7 1656.4L2530.8 1669.5" stroke="#0f8c28" stroke-width="1.9" fill="none" stroke-dasharray="21 8"/><path d="M2262.7 1656.4L2229.1 1667.8L2230.4 1641.8Z" fill="none" stroke="#0f8c28" stroke-width="1.8" stroke-linejoin="miter"/><path d="M1961.8 1641.8Q2092.5 1715.3 2226.3 1725.7M2259.3 1727.3Q2393.5 1730.0 2530.8 1669.5" stroke="#3a8fc4" stroke-width="1.9" fill="none"/><path d="M2259.3 1727.6L2225.7 1738.9L2226.9 1713.0Z" fill="none" stroke="#3a8fc4" stroke-width="1.8" stroke-linejoin="miter"/><path d="M1961.8 1641.8L2243.0 1731.0M2274.5 1741.0L2555.8 1830.2" stroke="#8264f0" stroke-width="1.9" fill="none" stroke-dasharray="21 8"/><path d="M2274.5 1741.0L2239.1 1743.4L2247.0 1718.6Z" fill="none" stroke="#8264f0" stroke-width="1.8" stroke-linejoin="miter"/><path d="M1961.8 1641.8Q2080.1 1756.7 2219.5 1805.1M2251.0 1815.0Q2392.8 1855.9 2555.8 1830.2" stroke="#3a8fc4" stroke-width="1.9" fill="none"/><path d="M2250.9 1815.2L2215.5 1817.7L2223.4 1792.9Z" fill="none" stroke="#3a8fc4" stroke-width="1.8" stroke-linejoin="miter"/><path d="M2537.0 1505.0L2821.8 1096.0M2840.7 1069.0L3125.5 660.0" stroke="#f58c46" stroke-width="1.9" fill="none" stroke-dasharray="21 8"/><path d="M2840.7 1069.0L2832.5 1103.5L2811.2 1088.6Z" fill="none" stroke="#f58c46" stroke-width="1.8" stroke-linejoin="miter"/><path d="M2537.0 1505.0Q2781.7 1371.7 2927.3 1169.5M2946.2 1142.4Q3085.3 935.7 3125.5 660.0" stroke="#3a8fc4" stroke-width="1.9" fill="none"/><path d="M2946.3 1142.5L2938.1 1177.0L2916.8 1162.2Z" fill="none" stroke="#3a8fc4" stroke-width="1.8" stroke-linejoin="miter"/><path d="M2537.0 1505.0L2824.7 1184.0M2846.8 1159.5L3134.5 838.5" stroke="#0f4b82" stroke-width="1.9" fill="none" stroke-dasharray="21 8"/><path d="M2846.8 1159.5L2834.4 1192.7L2815.1 1175.4Z" fill="none" stroke="#0f4b82" stroke-width="1.8" stroke-linejoin="miter"/><path d="M2537.0 1505.0Q2761.1 1416.5 2907.9 1258.6M2930.0 1234.1Q3070.9 1070.9 3134.5 838.5" stroke="#3a8fc4" stroke-width="1.9" fill="none"/><path d="M2930.1 1234.2L2917.7 1267.4L2898.4 1250.0Z" fill="none" stroke="#3a8fc4" stroke-width="1.8" stroke-linejoin="miter"/><path d="M2537.0 1505.0L2824.2 1270.2M2849.8 1249.3L3137.0 1014.5" stroke="#d22832" stroke-width="1.9" fill="none" stroke-dasharray="21 8"/><path d="M2849.8 1249.3L2832.5 1280.3L2816.0 1260.1Z" fill="none" stroke="#d22832" stroke-width="1.8" stroke-linejoin="miter"/><path d="M2537.0 1505.0Q2739.3 1459.4 2885.4 1345.1M2911.0 1324.2Q3052.1 1203.7 3137.0 1014.5" stroke="#3a8fc4" stroke-width="1.9" fill="none"/><path d="M2911.1 1324.3L2893.8 1355.3L2877.3 1335.1Z" fill="none" stroke="#3a8fc4" stroke-width="1.8" stroke-linejoin="miter"/><path d="M2537.0 1505.0L2821.9 1353.3M2851.1 1337.7L3136.0 1186.0" stroke="#3a8fc4" stroke-width="1.9" fill="none" stroke-dasharray="21 8"/><path d="M2851.1 1337.7L2828.0 1364.7L2815.8 1341.8Z" fill="none" stroke="#3a8fc4" stroke-width="1.8" stroke-linejoin="miter"/><path d="M2537.0 1505.0Q2717.4 1500.4 2861.7 1428.0M2890.8 1412.4Q3031.5 1333.1 3136.0 1186.0" stroke="#3a8fc4" stroke-width="1.9" fill="none"/><path d="M2890.9 1412.6L2867.9 1439.6L2855.7 1416.7Z" fill="none" stroke="#3a8fc4" stroke-width="1.8" stroke-linejoin="miter"/><path d="M2537.0 1505.0L2816.6 1426.7M2848.4 1417.8L3128.0 1339.5" stroke="#3a8fc4" stroke-width="1.9" fill="none"/><path d="M2848.4 1417.8L2820.1 1439.2L2813.1 1414.2Z" fill="none" stroke="#3a8fc4" stroke-width="1.8" stroke-linejoin="miter"/><path d="M2537.0 1505.0Q2696.4 1535.8 2837.2 1500.4M2869.0 1491.5Q3007.8 1448.6 3128.0 1339.5" stroke="#e65ae6" stroke-width="1.9" fill="none" stroke-dasharray="21 8"/><path d="M2869.1 1491.7L2840.8 1513.1L2833.8 1488.1Z" fill="none" stroke="#e65ae6" stroke-width="1.8" stroke-linejoin="miter"/><path d="M2537.0 1505.0L2788.0 1486.7M2821.0 1484.3L3072.0 1466.0" stroke="#3a8fc4" stroke-width="1.9" fill="none"/><path d="M2821.0 1484.3L2789.0 1499.7L2787.1 1473.7Z" fill="none" stroke="#3a8fc4" stroke-width="1.8" stroke-linejoin="miter"/><path d="M2537.0 1505.0Q2667.1 1558.6 2792.9 1553.3M2825.8 1550.9Q2951.1 1537.9 3072.0 1466.0" stroke="#f06e6e" stroke-width="1.9" fill="none" stroke-dasharray="21 8"/><path d="M2825.8 1551.2L2793.9 1566.5L2792.0 1540.6Z" fill="none" stroke="#f06e6e" stroke-width="1.8" stroke-linejoin="miter"/><path d="M2530.8 1669.5L2805.9 1644.7M2838.8 1641.8L3114.0 1617.0" stroke="#14c878" stroke-width="1.9" fill="none" stroke-dasharray="21 8"/><path d="M2838.8 1641.8L2807.1 1657.7L2804.8 1631.8Z" fill="none" stroke="#14c878" stroke-width="1.8" stroke-linejoin="miter"/><path d="M2530.8 1669.5Q2674.5 1725.9 2812.5 1717.4M2845.4 1714.4Q2982.6 1698.2 3114.0 1617.0" stroke="#3a8fc4" stroke-width="1.9" fill="none"/><path d="M2845.4 1714.7L2813.7 1730.6L2811.3 1704.7Z" fill="none" stroke="#3a8fc4" stroke-width="1.8" stroke-linejoin="miter"/><path d="M2530.8 1669.5L2814.8 1733.1M2847.0 1740.4L3131.0 1804.0" stroke="#c8501e" stroke-width="1.9" fill="none" stroke-dasharray="21 8"/><path d="M2847.0 1740.4L2811.9 1745.8L2817.6 1720.5Z" fill="none" stroke="#c8501e" stroke-width="1.8" stroke-linejoin="miter"/><path d="M2530.8 1669.5Q2656.9 1772.3 2798.0 1808.0M2830.2 1815.2Q2973.1 1843.2 3131.0 1804.0" stroke="#3a8fc4" stroke-width="1.9" fill="none"/><path d="M2830.2 1815.4L2795.1 1820.9L2800.8 1795.5Z" fill="none" stroke="#3a8fc4" stroke-width="1.8" stroke-linejoin="miter"/><path d="M3114.0 1617.0L3409.9 1425.0M3437.6 1407.0L3733.5 1215.0" stroke="#3a8fc4" stroke-width="1.9" fill="none"/><path d="M3437.6 1407.0L3417.0 1435.9L3402.8 1414.1Z" fill="none" stroke="#3a8fc4" stroke-width="1.8" stroke-linejoin="miter"/><path d="M3114.0 1617.0Q3310.0 1595.0 3460.1 1502.3M3487.7 1484.3Q3633.6 1385.0 3733.5 1215.0" stroke="#be7d1e" stroke-width="1.9" fill="none" stroke-dasharray="21 8"/><path d="M3487.8 1484.5L3467.2 1513.3L3453.1 1491.5Z" fill="none" stroke="#be7d1e" stroke-width="1.8" stroke-linejoin="miter"/><path d="M3114.0 1617.0L3413.2 1503.8M3444.1 1492.2L3743.2 1379.0" stroke="#3a8fc4" stroke-width="1.9" fill="none"/><path d="M3444.1 1492.2L3417.8 1516.0L3408.6 1491.7Z" fill="none" stroke="#3a8fc4" stroke-width="1.8" stroke-linejoin="miter"/><path d="M3114.0 1617.0Q3291.9 1635.2 3442.9 1582.3M3473.7 1570.6Q3621.9 1510.4 3743.2 1379.0" stroke="#bef01e" stroke-width="1.9" fill="none" stroke-dasharray="21 8"/><path d="M3473.8 1570.8L3447.5 1594.7L3438.3 1570.3Z" fill="none" stroke="#bef01e" stroke-width="1.8" stroke-linejoin="miter"/><path d="M3114.0 1617.0L3398.0 1571.4M3430.5 1566.1L3714.5 1520.5" stroke="#3a8fc4" stroke-width="1.9" fill="none"/><path d="M3430.5 1566.1L3400.0 1584.2L3395.9 1558.5Z" fill="none" stroke="#3a8fc4" stroke-width="1.8" stroke-linejoin="miter"/><path d="M3114.0 1617.0Q3267.4 1665.2 3410.0 1646.2M3442.6 1641.0Q3583.9 1614.3 3714.5 1520.5" stroke="#0fd2f0" stroke-width="1.9" fill="none" stroke-dasharray="21 8"/><path d="M3442.6 1641.2L3412.1 1659.3L3408.0 1633.6Z" fill="none" stroke="#0fd2f0" stroke-width="1.8" stroke-linejoin="miter"/><path d="M3131.0 1804.0L3420.9 1738.6M3453.1 1731.4L3743.0 1666.0" stroke="#3a8fc4" stroke-width="1.9" fill="none"/><path d="M3453.1 1731.4L3423.8 1751.3L3418.0 1725.9Z" fill="none" stroke="#3a8fc4" stroke-width="1.8" stroke-linejoin="miter"/><path d="M3131.0 1804.0Q3292.3 1843.8 3438.1 1814.9M3470.3 1807.7Q3614.4 1771.2 3743.0 1666.0" stroke="#be1ee6" stroke-width="1.9" fill="none" stroke-dasharray="21 8"/><path d="M3470.3 1807.9L3441.0 1827.8L3435.3 1802.4Z" fill="none" stroke="#be1ee6" stroke-width="1.8" stroke-linejoin="miter"/><path d="M3131.0 1804.0L3419.3 1808.7M3452.2 1809.3L3740.5 1814.0" stroke="#1ee650" stroke-width="1.9" fill="none" stroke-dasharray="21 8"/><path d="M3452.2 1809.3L3419.0 1821.7L3419.5 1795.7Z" fill="none" stroke="#1ee650" stroke-width="1.8" stroke-linejoin="miter"/><path d="M3131.0 1804.0Q3273.9 1878.4 3418.0 1884.7M3451.0 1885.2Q3595.2 1883.7 3740.5 1814.0" stroke="#3a8fc4" stroke-width="1.9" fill="none"/><path d="M3451.0 1885.5L3417.8 1897.9L3418.2 1871.9Z" fill="none" stroke="#3a8fc4" stroke-width="1.8" stroke-linejoin="miter"/></svg>
<div class="node" style="left:763.5px;top:1402px;width:341px;height:88px;border:4.5px solid #04e414;padding:14.5px 0 0 97.5px;border-radius:11px"><b style="left:37.5px;top:18.5px"></b>owl:Thing</div>
<div class="node" style="left:1208.0px;top:1114.0px;width:362.0px;height:86.0px"><b></b>IMCDevice</div>
<div class="node" style="left:1208.0px;top:1306.0px;width:442.5px;height:86.0px"><b></b>IMCComponent</div>
<div class="node" style="left:1208.0px;top:1498.0px;width:296.0px;height:86.0px"><b></b>idCode</div>
<div class="node" style="left:1208.0px;top:1690.0px;width:290.5px;height:86.0px"><b></b>idType</div>
<div class="node" style="left:1724.0px;top:1154.0px;width:387.5px;height:86.0px"><b></b>IMCdeviceId</div>
<div class="node" style="left:1720.5px;top:1338.5px;width:474.0px;height:132.0px"><b></b>IMCserviceOpera<br>tionProperties</div>
<div class="node" style="left:1726.5px;top:1575.5px;width:469.5px;height:131.5px"><b></b>IMCservicePrope<br>rties</div>
<div class="node" style="left:2299.0px;top:602.5px;width:448.5px;height:131.0px"><b></b>IMCoperatingInf<br>ormation</div>
<div class="node" style="left:2301.5px;top:767.5px;width:467.0px;height:131.0px"><b></b>IMCserviceConst<br>raintInformatio...</div>
<div class="node" style="left:2306.0px;top:928.5px;width:467.0px;height:131.0px"><b></b>IMCserviceObjec<br>tInformation</div>
<div class="node" style="left:2308.5px;top:1100.0px;width:499.5px;height:130.5px"><b></b>IMCcomponentTyp<br>e</div>
<div class="node" style="left:2307.0px;top:1268.0px;width:449.5px;height:131.0px"><b></b>IMCrunningInfor<br>mation</div>
<div class="node" style="left:2308.5px;top:1439.0px;width:456.0px;height:131.0px"><b></b>IMCproductionIn<br>formation</div>
<div class="node" style="left:2309.5px;top:1603.5px;width:441.5px;height:131.0px"><b></b>IMCfunctionalIn<br>formation</div>
<div class="node" style="left:2305.5px;top:1764.0px;width:499.5px;height:131.5px"><b></b>IMCcomponentGra<br>nularity</div>
<div class="node" style="left:2895.5px;top:594.0px;width:459.0px;height:131.0px"><b></b>componentIdenti<br>fication</div>
<div class="node" style="left:2897.0px;top:772.5px;width:474.0px;height:131.0px"><b></b>componentProvid<br>ers</div>
<div class="node" style="left:2899.5px;top:948.5px;width:474.0px;height:131.0px"><b></b>componentVersio<br>n</div>
<div class="node" style="left:2895.5px;top:1120.0px;width:480.0px;height:131.0px"><b></b>developmentLang<br>uage</div>
<div class="node" style="left:2893.5px;top:1296.0px;width:468.0px;height:86.0px"><b></b>componentName</div>
<div class="node" style="left:2895.5px;top:1422.5px;width:352.0px;height:86.0px"><b></b>entityType</div>
<div class="node" style="left:2893.5px;top:1551.0px;width:440.0px;height:131.0px"><b></b>functionalDescr<br>iption</div>
<div class="node" style="left:2891.5px;top:1738.0px;width:478.0px;height:131.0px"><b></b>performanceDesc<br>ription</div>
<div class="node" style="left:3511.5px;top:1149.0px;width:443.0px;height:131.0px"><b></b>functionalModul<br>e</div>
<div class="node" style="left:3507.0px;top:1313.0px;width:471.5px;height:131.0px"><b></b>communicationPr<br>otocol</div>
<div class="node" style="left:3509.5px;top:1477.0px;width:409.0px;height:86.0px"><b></b>deviceDrivers</div>
<div class="node" style="left:3512.0px;top:1600.0px;width:461.0px;height:131.0px"><b></b>resourcePerform<br>ance</div>
<div class="node" style="left:3506.5px;top:1770.5px;width:467.0px;height:86.0px"><b></b>timePerformance</div>
<svg class="abs" style="left:2314px;top:1276px" width="28" height="28" viewBox="0 0 28 28"><rect x="1" y="1" width="25" height="25" rx="2" fill="#dfe8f0" stroke="#8aa0b4" stroke-width="2"/><path d="M6 13.5 H21 M13.5 6 V21" stroke="#111" stroke-width="3.2"/></svg>
</body></html>
